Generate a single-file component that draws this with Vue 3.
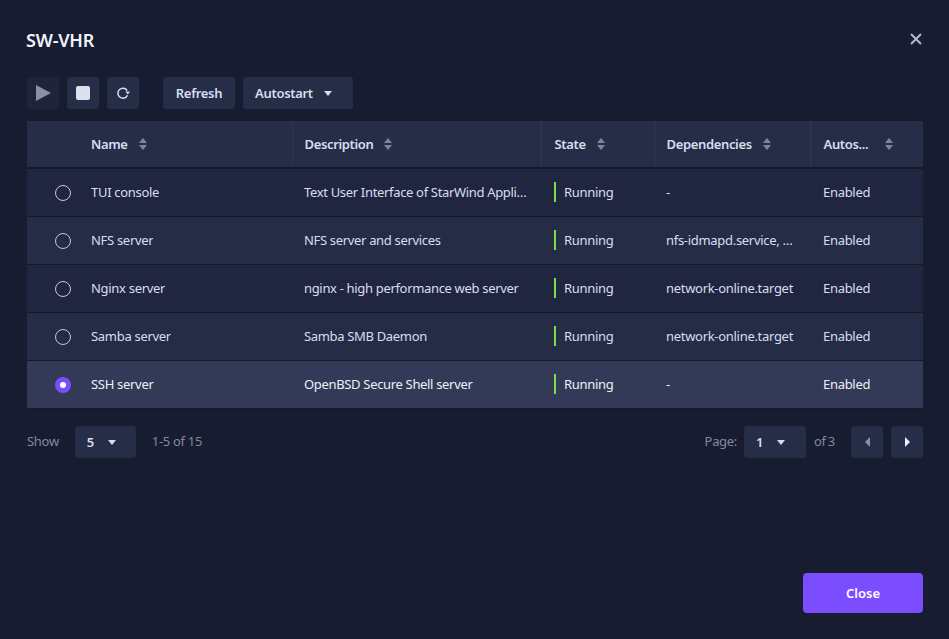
<template>
  <div class="modal">
    <header class="modal-head">
      <h1>SW-VHR</h1>
      <button class="close-x" aria-label="Close">
        <svg width="12" height="12" viewBox="0 0 12 12"><path d="M1 1l10 10M11 1L1 11" stroke="#b4b9ce" stroke-width="2" /></svg>
      </button>
    </header>

    <div class="toolbar">
      <button class="btn icon-btn">
        <svg width="15" height="16" viewBox="0 0 15 16"><path d="M0 0l15 8L0 16z" fill="#8a8fa8" /></svg>
      </button>
      <button class="btn icon-btn">
        <span class="stop"></span>
      </button>
      <button class="btn icon-btn">
        <svg width="14" height="14" viewBox="0 0 14 14" fill="none">
          <path d="M11.5 9.2A5 5 0 1 1 11.2 4.6" stroke="#d8dcec" stroke-width="1.5" />
          <path d="M9.4 5.4H14L11.8 8.6z" fill="#d8dcec" />
        </svg>
      </button>
      <button class="btn text-btn refresh">Refresh</button>
      <button class="btn text-btn autostart">Autostart <i class="caret"></i></button>
    </div>

    <table class="grid">
      <colgroup>
        <col style="width: 265px" />
        <col style="width: 249px" />
        <col style="width: 113px" />
        <col style="width: 156px" />
        <col style="width: 113px" />
      </colgroup>
      <thead>
        <tr>
          <th v-for="col in columns" :key="col.label" :class="col.cls">
            <div class="th-inner">
              <span>{{ col.label }}</span>
              <svg class="sort" width="8" height="12" viewBox="0 0 8 12"><path d="M4 0l4 5H0zM4 12L0 7h8z" fill="#7d839d" /></svg>
            </div>
          </th>
        </tr>
      </thead>
      <tbody>
        <tr v-for="row in rows" :key="row.name" :class="{ selected: row.selected }">
          <td class="name-cell">
            <div class="name-wrap">
              <span class="radio" :class="{ on: row.selected }"></span>
              <span class="clip">{{ row.name }}</span>
            </div>
          </td>
          <td class="desc-cell"><div class="clip">{{ row.description }}</div></td>
          <td><span class="state">Running</span></td>
          <td class="dep-cell"><div class="clip">{{ row.dependencies }}</div></td>
          <td>Enabled</td>
        </tr>
      </tbody>
    </table>

    <div class="pager">
      <span class="muted">Show</span>
      <button class="btn select show-select"><b>5</b><i class="caret"></i></button>
      <span class="muted range">1-5 of 15</span>
      <span class="muted page-label">Page:</span>
      <button class="btn select page-select"><b>1</b><i class="caret"></i></button>
      <span class="muted of">of 3</span>
      <button class="btn icon-btn prev"><i class="tri left"></i></button>
      <button class="btn icon-btn"><i class="tri right"></i></button>
    </div>

    <footer class="modal-foot">
      <button class="close-btn">Close</button>
    </footer>
  </div>
</template>

<script setup>
const columns = [
  { label: 'Name', cls: 'first' },
  { label: 'Description' },
  { label: 'State' },
  { label: 'Dependencies' },
  { label: 'Autos...', cls: 'wide-sort' }
];

const rows = [
  { name: 'TUI console', description: 'Text User Interface of StarWind Appliance', dependencies: '-' },
  { name: 'NFS server', description: 'NFS server and services', dependencies: 'nfs-idmapd.service, rpcbind.service' },
  { name: 'Nginx server', description: 'nginx - high performance web server', dependencies: 'network-online.target' },
  { name: 'Samba server', description: 'Samba SMB Daemon', dependencies: 'network-online.target' },
  { name: 'SSH server', description: 'OpenBSD Secure Shell server', dependencies: '-', selected: true }
];
</script>

<style>
html,
body {
  margin: 0;
  background: #171c30;
}
</style>

<style scoped>
.modal {
  box-sizing: border-box;
  width: 949px;
  height: 639px;
  padding: 0 26px 26px 27px;
  display: flex;
  flex-direction: column;
  background: #171c30;
  color: #d9deee;
  font-family: "Noto Sans", "Open Sans", sans-serif;
  font-size: 13px;
  letter-spacing: -0.3px;
}

.modal-head {
  display: flex;
  justify-content: space-between;
  align-items: center;
  height: 77px;
}

h1 {
  margin: 0 0 -3px -1px;
  font-size: 18px;
  font-weight: 600;
  letter-spacing: -0.2px;
  color: #f0f2fa;
}

.close-x {
  display: flex;
  padding: 0;
  margin-right: 1px;
  border: none;
  background: none;
}

.toolbar {
  display: flex;
  gap: 8px;
  height: 32px;
  margin-bottom: 12px;
}

.btn {
  display: flex;
  align-items: center;
  justify-content: center;
  height: 32px;
  padding: 0;
  border: none;
  border-radius: 3px;
  background: #262d47;
  color: #d9deee;
  font: inherit;
  font-weight: 600;
  letter-spacing: -0.3px;
}

.icon-btn {
  width: 32px;
}

.toolbar .icon-btn:first-child {
  background: #1f2539;
}

.stop {
  width: 14px;
  height: 14px;
  border-radius: 2px;
  background: #dcdfee;
}

.refresh {
  width: 72px;
  margin-left: 16px;
}

.autostart {
  width: 110px;
  padding-left: 12px;
  justify-content: flex-start;
  gap: 11px;
}

.caret {
  display: inline-block;
  width: 0;
  height: 0;
  margin-top: 1px;
  border-left: 4px solid transparent;
  border-right: 4px solid transparent;
  border-top: 5px solid #d9deee;
}

.grid {
  width: 896px;
  table-layout: fixed;
  border-collapse: collapse;
}

thead tr {
  height: 47px;
  background: #262d47;
}

th {
  padding: 0 12px;
  text-align: left;
  font-weight: 600;
  letter-spacing: -0.35px;
  border-left: 1px solid #2f3754;
  border-bottom: 2px solid #141829;
}

th.first {
  padding-left: 64px;
  border-left: none;
}

th:nth-child(3),
th:nth-child(5),
td:nth-child(3),
td:nth-child(5) {
  padding-left: 13px;
}

.th-inner {
  display: flex;
  align-items: center;
  gap: 11px;
}

.wide-sort .th-inner {
  gap: 17px;
}

.sort {
  flex-shrink: 0;
}

tbody tr {
  height: 48px;
  background: #20263f;
}

tbody tr:nth-child(even) {
  background: #252c46;
}

tbody tr.selected {
  background: #323a57;
  color: #eef0f8;
}

td {
  padding: 0 12px;
  border-bottom: 1px solid #141829;
}

.desc-cell {
  padding-right: 11px;
  letter-spacing: -0.33px;
}

.dep-cell {
  padding-right: 15px;
}

.clip {
  overflow: hidden;
  white-space: nowrap;
  text-overflow: ellipsis;
}

.name-cell {
  padding-left: 28px;
}

.name-wrap {
  display: flex;
  align-items: center;
  gap: 20px;
}

.radio {
  flex-shrink: 0;
  box-sizing: border-box;
  width: 16px;
  height: 16px;
  margin-top: 2px;
  border: 1px solid #c3c7d6;
  border-radius: 50%;
}

.radio.on {
  border: 5px solid #7c4dff;
  background: #fff;
}

.state {
  display: block;
  padding-left: 8px;
  line-height: 20px;
  border-left: 2px solid #7fd84f;
}

.pager {
  display: flex;
  align-items: center;
  margin-top: 17px;
}

.muted {
  padding-bottom: 2px;
  color: #8088a6;
}

.select {
  justify-content: flex-start;
  padding-left: 12px;
  gap: 14px;
}

.select b {
  font-weight: 600;
}

.show-select {
  width: 61px;
  margin-left: 16px;
}

.range {
  margin-left: 16px;
}

.page-label {
  margin-left: auto;
}

.page-select {
  width: 62px;
  margin-left: 7px;
}

.of {
  margin-left: 8px;
  margin-right: 16px;
  word-spacing: -1px;
}

.prev {
  margin-right: 8px;
}

.tri {
  width: 0;
  height: 0;
  border-top: 5px solid transparent;
  border-bottom: 5px solid transparent;
}

.tri.left {
  border-right: 5px solid #8a8fa8;
}

.tri.right {
  border-left: 5px solid #eef0f8;
}

.modal-foot {
  display: flex;
  justify-content: flex-end;
  margin-top: auto;
}

.close-btn {
  width: 120px;
  height: 40px;
  border: none;
  border-radius: 4px;
  background: #7c4dff;
  color: #fff;
  font: inherit;
  font-weight: 600;
}
</style>
